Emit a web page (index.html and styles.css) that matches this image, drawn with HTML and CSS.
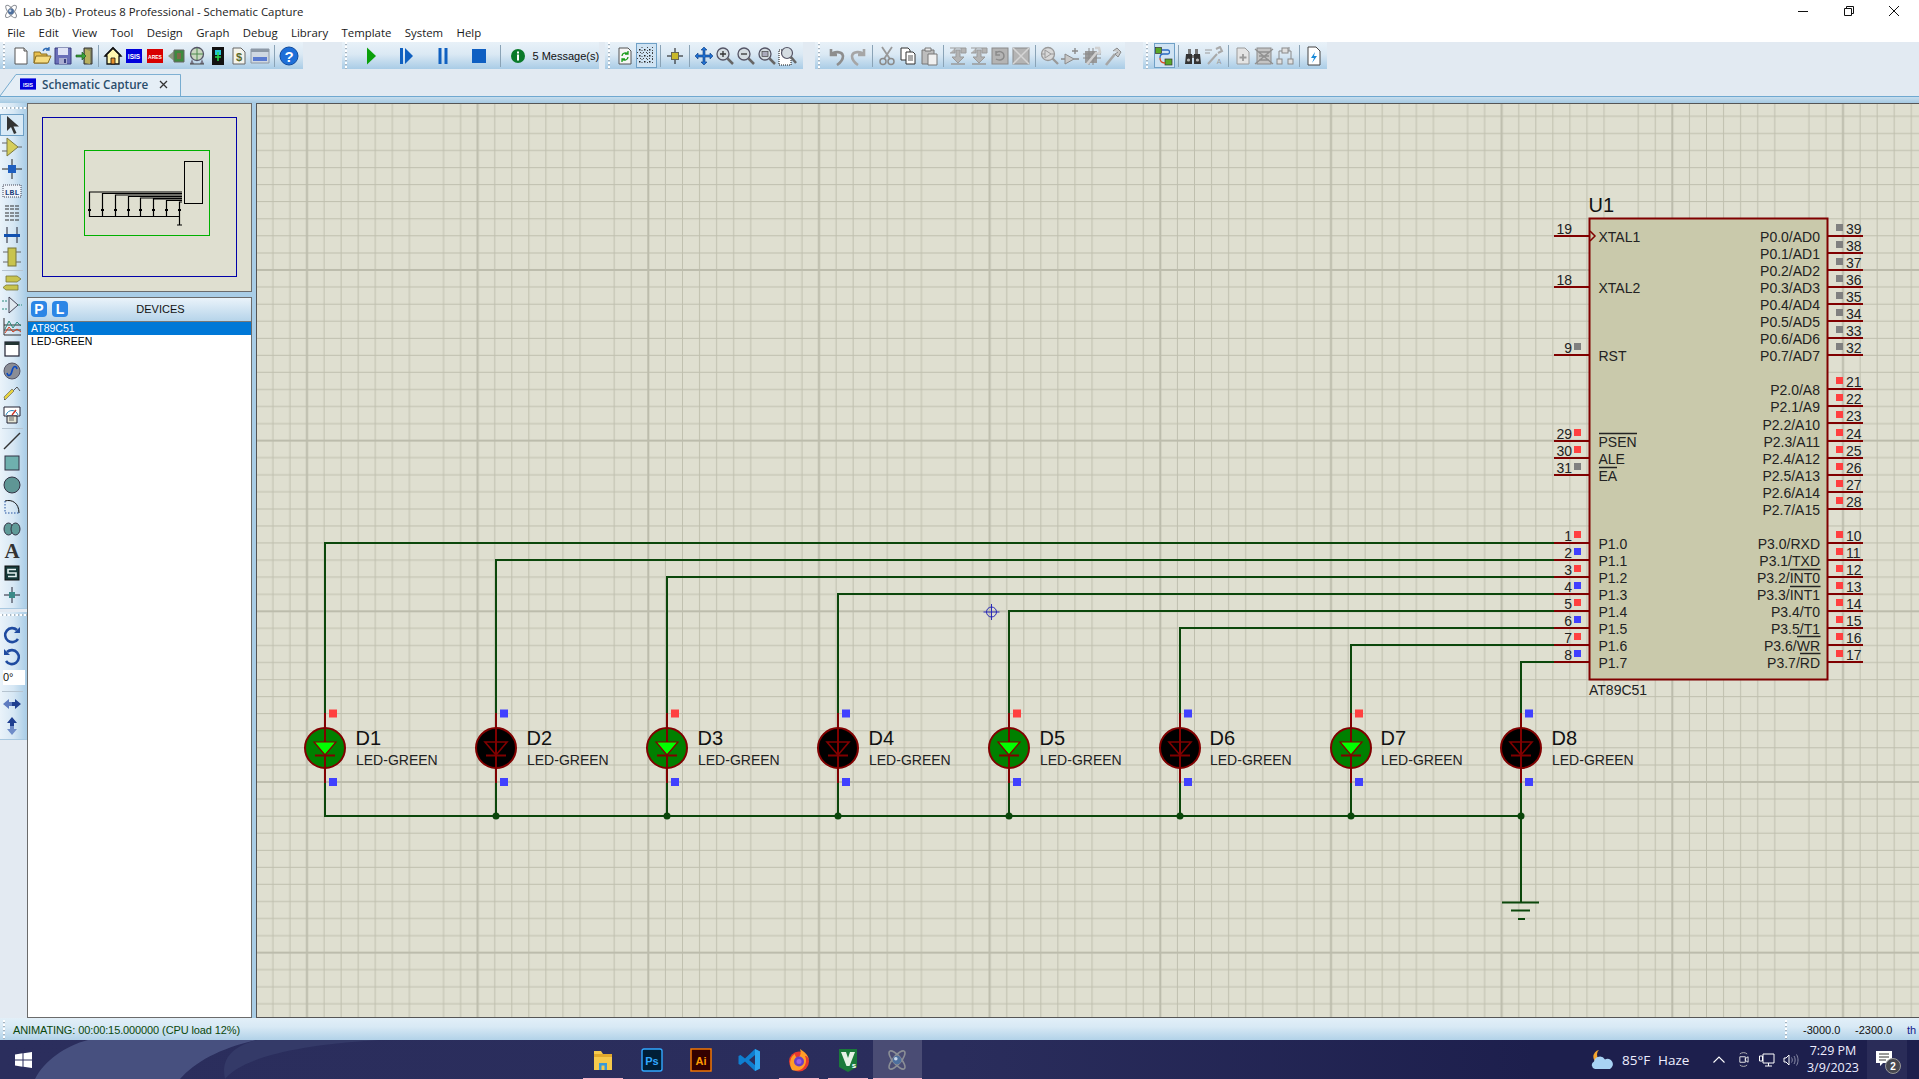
FILE: index.html
```html
<!DOCTYPE html>
<html lang="en">
<head>
<meta charset="utf-8">
<title>Lab 3(b) - Proteus 8 Professional - Schematic Capture</title>
<link rel="stylesheet" href="styles.css">
</head>
<body>
<svg class="defs" width="0" height="0" aria-hidden="true">
  <defs>
    <symbol id="atom" viewBox="0 0 20 20">
      <g fill="none" stroke="#8b8f96" stroke-width="1.3">
        <ellipse cx="10" cy="10" rx="9.5" ry="3.4" transform="rotate(50 10 10)"/>
        <ellipse cx="10" cy="10" rx="9.5" ry="3.4" transform="rotate(-50 10 10)"/>
      </g>
      <circle cx="10" cy="10" r="3.6" fill="#4d6f9e"/>
      <circle cx="9" cy="9" r="1.5" fill="#c9d8ea"/>
    </symbol>
    <g id="led-on">
      <path d="M0 713V783" stroke="#800000" stroke-width="2"/>
      <circle cx="0" cy="748" r="20" fill="#008000" stroke="#800000" stroke-width="2"/>
      <path d="M-11 742H11L0 755Z" fill="#00ff00" stroke="#800000" stroke-width="1.200"/>
      <path d="M0 728V742M0 755V768M-10 755.500H10" stroke="#800000" stroke-width="2" fill="none"/>
    </g>
    <g id="led-off">
      <path d="M0 713V783" stroke="#800000" stroke-width="2"/>
      <circle cx="0" cy="748" r="20" fill="#000" stroke="#800000" stroke-width="2"/>
      <path d="M-11 742H11L0 755Z" fill="none" stroke="#800000" stroke-width="1.600"/>
      <path d="M0 728V768M-10 755.500H10" stroke="#800000" stroke-width="2" fill="none"/>
    </g>
    <pattern id="grid" x="255.800" y="99.300" width="170.670" height="170.670" patternUnits="userSpaceOnUse">
      <path class="g-thin" d="M17.070 0V171M34.130 0V171M51.200 0V171M68.270 0V171M85.330 0V171M102.400 0V171M119.470 0V171M136.530 0V171M153.600 0V171M0 17.070H171M0 34.130H171M0 51.200H171M0 68.270H171M0 85.330H171M0 102.400H171M0 119.470H171M0 136.530H171M0 153.600H171"/>
      <path class="g-thick" d="M51.200 0V171M0 0H171M0 170.670H171"/>
    </pattern>
  </defs>
</svg>

<header class="titlebar">
  <svg class="title-ico"><use href="#atom"/></svg>
  <span class="title-text">Lab 3(b) - Proteus 8 Professional - Schematic Capture</span>
  <div class="winctl">
    <span class="winbtn"><svg width="12" height="12" viewBox="0 0 12 12"><path d="M1 6.500H11" stroke="#111" fill="none"/></svg></span>
    <span class="winbtn"><svg width="12" height="12" viewBox="0 0 12 12"><path d="M1.500 3.500H8.500V10.500H1.500ZM3.500 3.500V1.500H10.500V8.500H8.500" stroke="#111" fill="none"/></svg></span>
    <span class="winbtn"><svg width="12" height="12" viewBox="0 0 12 12"><path d="M1 1L11 11M11 1L1 11" stroke="#111" fill="none"/></svg></span>
  </div>
</header>

<nav class="menubar">
  <span class="menu">File</span><span class="menu">Edit</span><span class="menu">View</span><span class="menu">Tool</span><span class="menu">Design</span><span class="menu">Graph</span><span class="menu">Debug</span><span class="menu">Library</span><span class="menu">Template</span><span class="menu">System</span><span class="menu">Help</span>
</nav>

<div class="toolbar">
  <div class="tbgroup g1">
    <span class="grip-v g-a"></span>
    <span class="tb"><svg viewBox="0 0 20 20"><path d="M4 2H13L16 5V18H4Z" fill="#fff" stroke="#555"/><path d="M13 2V5H16" fill="#ddd" stroke="#555"/></svg></span>
    <span class="tb"><svg viewBox="0 0 20 20"><path d="M2 6H8L9 8H15V17H2Z" fill="#e8c04e" stroke="#8a6d1e"/><path d="M4 10H19L16 17H2Z" fill="#f6dc80" stroke="#8a6d1e"/><path d="M11 5C12 2 15 2 17 3M17 1V4H14" fill="none" stroke="#2f6bb5" stroke-width="1.300"/></svg></span>
    <span class="tb"><svg viewBox="0 0 20 20"><path d="M2 2H18V18H2Z" fill="#6a6fb8" stroke="#3a3f80"/><path d="M5 2H15V9H5Z" fill="#dfe3f5"/><path d="M6 12H14V18H6Z" fill="#a9add0"/><path d="M11 13H13V17H11Z" fill="#3a3f80"/></svg></span>
    <span class="tb"><svg viewBox="0 0 20 20"><path d="M10 2H18V18H10Z" fill="#8a8a62" stroke="#333"/><path d="M11 3L16 5V18L11 17Z" fill="#b8b060"/><path d="M2 9H8V6L12 10L8 14V11H2Z" fill="#3aa23a" stroke="#145214" stroke-width=".6"/></svg></span>
    <span class="sep-v"></span>
    <span class="tb"><svg viewBox="0 0 20 20"><path d="M10 2L18 10H16V18H4V10H2Z" fill="#fff7b0" stroke="#111" stroke-width="1.300"/><path d="M2 10L10 2L18 10" fill="none" stroke="#111" stroke-width="1.600"/><path d="M8 12H12V18H8Z" fill="#e8902a" stroke="#111" stroke-width=".8"/></svg></span>
    <span class="tb"><svg viewBox="0 0 20 20"><rect x="2" y="3" width="16" height="14" fill="#0000dc"/><text x="10" y="13" class="logo-txt" text-anchor="middle">ISIS</text></svg></span>
    <span class="tb"><svg viewBox="0 0 20 20"><rect x="2" y="3" width="16" height="14" fill="#d80000"/><text x="10" y="12.500" class="logo-txt ares" text-anchor="middle">ARES</text></svg></span>
    <span class="tb"><svg viewBox="0 0 20 20"><path d="M2 10L8 5V15Z" fill="#8a9a80"/><path d="M8 4H18V16H8Z" fill="#3e8a3e" stroke="#666"/><path d="M11 7H15V13H11Z" fill="#7c6a48"/></svg></span>
    <span class="tb"><svg viewBox="0 0 20 20"><circle cx="10" cy="8" r="6.500" fill="#c9d6c0" stroke="#556"  stroke-width="1.300"/><path d="M10 2V14M4 8H16" stroke="#4e8a4e"/><path d="M5 13L3 18H7ZM15 13L13 18H17Z" fill="#778"/><path d="M3 18H17" stroke="#444"/></svg></span>
    <span class="tb"><svg viewBox="0 0 20 20"><path d="M4 1H16V19H4Z" fill="#111"/><path d="M7 4H13V9H7Z" fill="#24c4d8"/><path d="M10 6V15M7 11H13" stroke="#24d84a" stroke-width="1.500"/></svg></span>
    <span class="tb"><svg viewBox="0 0 20 20"><path d="M4 2H12L16 6V18H4Z" fill="#f4f4ec" stroke="#666"/><text x="10" y="15" class="dollar" text-anchor="middle">$</text></svg></span>
    <span class="tb"><svg viewBox="0 0 20 20"><path d="M1 3H19V17H1Z" fill="#cfd8e2" stroke="#8d99a6"/><path d="M1 3H19V6H1Z" fill="#8d99a6"/><path d="M3 11H17V15H3Z" fill="#5a7bd0"/></svg></span>
    <span class="sep-v"></span>
    <span class="tb"><svg viewBox="0 0 20 20"><circle cx="10" cy="10" r="9" fill="#1e6fd8" stroke="#0f4b9e"/><text x="10" y="15.500" class="help-q" text-anchor="middle">?</text></svg></span>
  </div>

  <div class="tbgroup g2">
    <span class="grip-v g-b"></span>
    <span class="tb-wide"><svg viewBox="0 0 20 20"><path d="M6 1.500L15 10L6 18.500Z" fill="#0aa00a"/></svg></span>
    <span class="tb-wide"><svg viewBox="0 0 20 20"><path d="M3 2H6V18H3Z" fill="#1060c0"/><path d="M8 2L16 10L8 18Z" fill="#1060c0"/></svg></span>
    <span class="tb-wide"><svg viewBox="0 0 20 20"><path d="M5.500 2H8.500V18H5.500ZM11.500 2H14.500V18H11.500Z" fill="#1060c0"/></svg></span>
    <span class="tb-wide"><svg viewBox="0 0 20 20"><rect x="3" y="3" width="14" height="14" fill="#0f5fc2"/></svg></span>
    <span class="sep-v sep-short"></span>
    <svg class="info" viewBox="0 0 14 14"><circle cx="7" cy="7" r="7" fill="#0a7a2a"/><rect x="6" y="2.500" width="2" height="2" fill="#fff"/><rect x="6" y="5.500" width="2" height="6" fill="#fff"/></svg>
    <span class="msg">5 Message(s)</span>
  </div>

  <div class="tbgroup g3">
    <span class="grip-v g-c"></span>
    <span class="tb"><svg viewBox="0 0 20 20"><path d="M4 2H13L16 5V18H4Z" fill="#f5f5f5" stroke="#555"/><path d="M7 10C7 7 11 6 13 8M13 5V8H10M13 11C13 14 9 15 7 13M7 16V13H10" fill="none" stroke="#1a9a1a" stroke-width="1.300"/></svg></span>
    <span class="tb active"><svg viewBox="0 0 20 20"><path d="M3 3H4.500V4.500H3ZM8 3H9.500V4.500H8ZM13 3H14.500V4.500H13ZM3 9H4.500V10.500H3ZM8 9H9.500V10.500H8ZM13 9H14.500V10.500H13ZM3 15H4.500V16.500H3ZM8 15H9.500V16.500H8ZM13 15H14.500V16.500H13Z" fill="#222"/><path d="M1 6.500H18M1 12.500H18M6 1V18M11.500 1V18M16.500 1V18" stroke="#444" stroke-dasharray="1 2"/></svg></span>
    <span class="sep-v"></span>
    <span class="tb"><svg viewBox="0 0 20 20"><path d="M10 2V18M2 10H18" stroke="#111"/><rect x="6.500" y="6.500" width="7" height="7" fill="#c8b82a" stroke="#665"/></svg></span>
    <span class="sep-v"></span>
    <span class="tb"><svg viewBox="0 0 20 20"><path d="M10 1L13 4H11V9H16V7L19 10L16 13V11H11V16H13L10 19L7 16H9V11H4V13L1 10L4 7V9H9V4H7Z" fill="#1f6fd0" stroke="#0c3b80" stroke-width=".6"/></svg></span>
    <span class="tb"><svg viewBox="0 0 20 20"><circle cx="8" cy="8" r="6" fill="#d5dde2" stroke="#556" stroke-width="1.300"/><path d="M5 8H11M8 5V11" stroke="#333" stroke-width="1.300"/><path d="M12.500 12.500L18 18" stroke="#666" stroke-width="2.500"/></svg></span>
    <span class="tb"><svg viewBox="0 0 20 20"><circle cx="8" cy="8" r="6" fill="#d5dde2" stroke="#556" stroke-width="1.300"/><path d="M5 8H11" stroke="#333" stroke-width="1.300"/><path d="M12.500 12.500L18 18" stroke="#666" stroke-width="2.500"/></svg></span>
    <span class="tb"><svg viewBox="0 0 20 20"><circle cx="8" cy="8" r="6" fill="#d5dde2" stroke="#556" stroke-width="1.300"/><rect x="5" y="5.500" width="6" height="5" fill="#aab" stroke="#444" stroke-width=".7"/><path d="M12.500 12.500L18 18" stroke="#666" stroke-width="2.500"/></svg></span>
    <span class="tb"><svg viewBox="0 0 20 20"><path d="M1 4H13V19H1Z" fill="#fff" stroke="#111" stroke-dasharray="1 1"/><circle cx="9" cy="7" r="5.500" fill="#d5dde2" stroke="#556" stroke-width="1.200"/><path d="M13 11L18 17" stroke="#666" stroke-width="2.500"/></svg></span>
  </div>

  <div class="tbgroup g4">
    <span class="grip-v g-d"></span>
    <span class="tb"><svg viewBox="0 0 20 20"><path d="M4 3V9H10M4 9C7 5 15 5 16 10C16 14 13 17 10 19" fill="none" stroke="#8e8e8e" stroke-width="2.600"/></svg></span>
    <span class="tb"><svg viewBox="0 0 20 20"><path d="M16 3V9H10M16 9C13 5 5 5 4 10C4 14 7 17 10 19" fill="none" stroke="#a6a6a6" stroke-width="2.600"/></svg></span>
    <span class="sep-v"></span>
    <span class="tb"><svg viewBox="0 0 20 20"><path d="M5 1L13 13M15 1L7 13" stroke="#999" stroke-width="1.800"/><circle cx="6" cy="15.500" r="3" fill="none" stroke="#8a8a8a" stroke-width="1.500"/><circle cx="14" cy="15.500" r="3" fill="none" stroke="#8a8a8a" stroke-width="1.500"/></svg></span>
    <span class="tb"><svg viewBox="0 0 20 20"><path d="M3 2H10L12 4V14H3Z" fill="#fff" stroke="#333"/><path d="M8 6H15L17 8V18H8Z" fill="#fff" stroke="#333"/><path d="M10 10H15M10 12H15M10 14H15" stroke="#555"/></svg></span>
    <span class="tb"><svg viewBox="0 0 20 20"><path d="M3 4H15V18H3Z" fill="#bdbdbd" stroke="#777"/><path d="M6 2H12V5H6Z" fill="#e8e8e8" stroke="#777"/><path d="M9 8H18V19H9Z" fill="#f0f0f0" stroke="#777"/></svg></span>
    <span class="sep-v"></span>
    <span class="tb"><svg viewBox="0 0 20 20"><path d="M2 2H18V7H13V2M7 2V7H2M8 4H12V11H16L10 17L4 11H8Z" fill="#b4b4b4" stroke="#9a9a9a"/><path d="M3 18H17" stroke="#9a9a9a" stroke-width="1.500"/></svg></span>
    <span class="tb"><svg viewBox="0 0 20 20"><path d="M2 2H18V7H13V2M7 2V7H2M8 4H12V11H16L10 17L4 11H8Z" fill="#b4b4b4" stroke="#9a9a9a"/><path d="M3 18H17" stroke="#9a9a9a" stroke-width="1.500"/></svg></span>
    <span class="tb"><svg viewBox="0 0 20 20"><rect x="2" y="2" width="16" height="16" fill="#b4b4b4" stroke="#8a8a8a"/><path d="M6 7C9 4 14 6 14 10C14 14 9 15 6 13M6 5V9H10" fill="none" stroke="#8a8a8a" stroke-width="1.400"/></svg></span>
    <span class="tb"><svg viewBox="0 0 20 20"><rect x="2" y="2" width="16" height="16" fill="#b4b4b4" stroke="#8a8a8a"/><path d="M2 2L18 18M18 2L2 18" stroke="#d5d5d5" stroke-width="1.500"/></svg></span>
    <span class="sep-v"></span>
    <span class="tb"><svg viewBox="0 0 20 20"><circle cx="8" cy="8" r="6.500" fill="#d8d8d8" stroke="#999" stroke-width="1.300"/><path d="M5 4L11 8L5 12ZM1 8H5M11 8H15" fill="none" stroke="#9a9a9a"/><path d="M12.500 12.500L18 18" stroke="#999" stroke-width="2.300"/></svg></span>
    <span class="tb"><svg viewBox="0 0 20 20"><path d="M4 8L13 13L4 18Z" fill="#c8c8c8" stroke="#8a8a8a"/><path d="M0 13H4M13 13H18M14 2V8M11 5H17" stroke="#8a8a8a" stroke-width="1.400"/></svg></span>
    <span class="tb"><svg viewBox="0 0 20 20"><rect x="3" y="5" width="12" height="12" fill="#9a9a9a"/><path d="M1 8H19M1 12H19M7 2V19M11 2V19" stroke="#8a8a8a"/><path d="M5 18L15 6M13 2L17 2L18 6L16 8" stroke="#d0d0d0" stroke-width="2.500" fill="none"/></svg></span>
    <span class="tb"><svg viewBox="0 0 20 20"><path d="M3 19L12 8" stroke="#a6a6a6" stroke-width="2.600"/><path d="M10 5L14 2L18 6L15 11L12 8L15 6" fill="#c8c8c8" stroke="#8a8a8a"/></svg></span>
  </div>

  <div class="tbgroup g5">
    <span class="grip-v g-e"></span>
    <span class="tb active"><svg viewBox="0 0 20 20"><rect x="1.500" y="1.500" width="6" height="6" fill="#5aa828" stroke="#333" stroke-width=".7"/><rect x="11" y="13" width="7" height="6" fill="#5aa828" stroke="#333" stroke-width=".7"/><path d="M8 4H14C16 4 16 8 14 8H9C7 8 6 10 6 12" fill="none" stroke="#2a6ac0" stroke-width="1.300"/><path d="M6 12C6 15 7 17 11 17" fill="none" stroke="#d84a20" stroke-width="1.300"/></svg></span>
    <span class="sep-v"></span>
    <span class="tb"><svg viewBox="0 0 20 20"><path d="M3 8H9V18H2ZM11 8H17L18 18H11Z" fill="#333"/><path d="M5 3H8V8H5ZM12 3H15V8H12ZM9 9H11V12H9Z" fill="#777"/><circle cx="5.500" cy="14" r="1.600" fill="#bbb"/><circle cx="14.500" cy="14" r="1.600" fill="#bbb"/></svg></span>
    <span class="tb"><svg viewBox="0 0 20 20"><path d="M1 4H8M1 7H6" stroke="#999" stroke-width="1.200"/><path d="M4 18L13 8M12 3L16 1L18 5L14 7" stroke="#a9a9a9" stroke-width="2" fill="none"/><text x="15" y="18" class="small-a" text-anchor="middle">A</text></svg></span>
    <span class="sep-v"></span>
    <span class="tb"><svg viewBox="0 0 20 20"><path d="M4 2H12L16 6V18H4Z" fill="#e4e4e4" stroke="#9a9a9a"/><path d="M10 8V15M6.500 11.500H13.500" stroke="#9a9a9a" stroke-width="1.800"/></svg></span>
    <span class="tb"><svg viewBox="0 0 20 20"><rect x="3" y="2" width="14" height="16" fill="#c4c4c4" stroke="#8a8a8a"/><path d="M1 3L19 18M19 3L1 18M5 6H15M5 10H15M5 14H15" stroke="#8f8f8f" stroke-width="1.300"/></svg></span>
    <span class="tb"><svg viewBox="0 0 20 20"><rect x="7" y="2" width="6" height="5" fill="#e0e0e0" stroke="#8a8a8a"/><rect x="2" y="13" width="5" height="5" fill="#e0e0e0" stroke="#8a8a8a"/><rect x="13" y="13" width="5" height="5" fill="#e0e0e0" stroke="#8a8a8a"/><path d="M7 5H4V13M13 5H16V13M14 1V5" fill="none" stroke="#8a8a8a"/></svg></span>
    <span class="sep-v"></span>
    <span class="tb"><svg viewBox="0 0 20 20"><path d="M4 1H12L16 5V19H4Z" fill="#fff" stroke="#444"/><path d="M11 6L7 12H10L8 17L13 10H10Z" fill="#1a8ad8"/></svg></span>
  </div>
</div>

<div class="tabrow">
  <div class="tab">
    <svg class="tab-shape" viewBox="0 0 181 26" preserveAspectRatio="none"><path d="M0 26L16 .500H180.500V26" fill="#e5eef6" stroke="#6ea6cc"/></svg>
    <svg class="tab-ico" viewBox="0 0 20 14"><rect width="20" height="14" fill="#0000dc"/><text x="10" y="10.500" class="logo-txt" text-anchor="middle">ISIS</text></svg>
    <span class="tab-label">Schematic Capture</span>
    <svg class="tab-close" viewBox="0 0 9 9"><path d="M1 1L8 8M8 1L1 8" stroke="#333" stroke-width="1.300"/></svg>
  </div>
</div>
<div class="strip"></div>

<main class="workspace">
  <aside class="lefttools">
    <div class="ltgroup">
      <span class="grip-h"></span>
      <span class="lt active"><svg viewBox="0 0 20 20"><path d="M5 1V16L9 12L12 19L14.500 18L11.500 11.500H17Z" fill="#333"/></svg></span>
      <span class="lt"><svg viewBox="0 0 20 20"><path d="M5 1V19L16 10Z" fill="#d6ce5a" stroke="#7c7a40"/><path d="M0 6H5M0 14H5M16 10H20" stroke="#666"/></svg></span>
      <span class="lt"><svg viewBox="0 0 20 20"><path d="M10 0V20M0 10H20" stroke="#222"/><rect x="6" y="6" width="8" height="8" fill="#1f5fc0"/></svg></span>
      <span class="lt"><svg viewBox="0 0 20 20"><rect x="1" y="4" width="18" height="12" fill="#eef4fa" stroke="#445" stroke-dasharray="1 1"/><text x="10" y="13.500" class="lbl-txt" text-anchor="middle">LBL</text></svg></span>
      <span class="lt"><svg viewBox="0 0 20 20"><path d="M3 3H17M3 6H17M3 10H17M3 13H17M3 17H17" stroke="#333" stroke-width="1.200" stroke-dasharray="4 1"/></svg></span>
      <span class="lt"><svg viewBox="0 0 20 20"><path d="M5 2V18M15 2V18" stroke="#223"/><rect x="2" y="9" width="16" height="3" fill="#1050b0"/></svg></span>
      <span class="lt"><svg viewBox="0 0 20 20"><path d="M1 5H6M14 5H19M1 15H6M14 15H19" stroke="#666"/><rect x="6" y="1" width="8" height="18" fill="#c8c44e" stroke="#77753a"/></svg></span>
      <span class="lt-sep"></span>
      <span class="lt"><svg viewBox="0 0 20 20"><path d="M4 3H15L19 6L15 9H4Z" fill="#c8c44e" stroke="#77753a" stroke-width=".8"/><path d="M4 12H16L16 17H4L1 14.500Z" fill="#c8c44e" stroke="#77753a" stroke-width=".8"/></svg></span>
      <span class="lt"><svg viewBox="0 0 20 20"><path d="M7 2L16 10L7 18Z" fill="#dfe8ee" stroke="#445"/><path d="M0 6H5M0 14H5M16 10H20" stroke="#2a8a7a" stroke-dasharray="2 1"/></svg></span>
      <span class="lt"><svg viewBox="0 0 20 20"><path d="M2 1V18H19M2 13H19M2 8H19" stroke="#333" fill="none"/><path d="M3 12L7 4L11 11L15 5L19 9" stroke="#2a8a7a" fill="none"/><path d="M3 16L7 10L11 15L15 12L19 15" stroke="#d04020" fill="none"/></svg></span>
      <span class="lt"><svg viewBox="0 0 20 20"><rect x="3" y="3" width="14" height="14" fill="#fff" stroke="#223" stroke-width="1.200"/><rect x="3" y="3" width="14" height="3" fill="#233"/></svg></span>
      <span class="lt"><svg viewBox="0 0 20 20"><circle cx="10" cy="10" r="8" fill="#8a8d96" stroke="#556"/><path d="M5 12C6 16 9 15 10 10C11 5 14 4 15 8" fill="none" stroke="#0c4ac0" stroke-width="1.600"/></svg></span>
      <span class="lt"><svg viewBox="0 0 20 20"><path d="M2 17L12 7L15 4L18 8" fill="none" stroke="#555"/><path d="M3 17L12 8L10 6L2 14Z" fill="#e6d340" stroke="#555" stroke-width=".6"/></svg></span>
      <span class="lt"><svg viewBox="0 0 20 20"><path d="M2 2H18V11H2Z" fill="#fff" stroke="#223"/><path d="M4 10C6 4 14 4 16 10" fill="none" stroke="#2a8ac0"/><path d="M10 10L14 5" stroke="#d03020" stroke-width="1.300"/><path d="M5 11H15V18H5Z" fill="#e4e4d4" stroke="#223"/><path d="M7 13H12M7 15H12" stroke="#666"/></svg></span>
      <span class="lt-sep"></span>
      <span class="lt"><svg viewBox="0 0 20 20"><path d="M2 18L18 2" stroke="#333" stroke-width="1.500"/></svg></span>
      <span class="lt"><svg viewBox="0 0 20 20"><rect x="3" y="3" width="14" height="14" fill="#6fb0ae" stroke="#334"/></svg></span>
      <span class="lt"><svg viewBox="0 0 20 20"><circle cx="10" cy="10" r="8" fill="#5f9695" stroke="#334"/></svg></span>
      <span class="lt"><svg viewBox="0 0 20 20"><path d="M3 4C10 2 17 6 17 16" fill="none" stroke="#111"/><path d="M3 4V16H17" fill="none" stroke="#2050a0" stroke-dasharray="1.500 1.500"/></svg></span>
      <span class="lt"><svg viewBox="0 0 20 20"><ellipse cx="6.500" cy="10" rx="4.500" ry="6" fill="#5f9a98" stroke="#334"/><ellipse cx="13.500" cy="10" rx="4.500" ry="6" fill="#5f9a98" stroke="#334"/></svg></span>
      <span class="lt"><span class="lt-a">A</span></span>
      <span class="lt"><svg viewBox="0 0 20 20"><rect x="3" y="3" width="14" height="14" fill="#163a3a" stroke="#111"/><path d="M14 6.500H6V10H14V13.500H6" fill="none" stroke="#e4f0f0" stroke-width="1.600"/></svg></span>
      <span class="lt"><svg viewBox="0 0 20 20"><path d="M10 2V18M2 10H18" stroke="#223"/><rect x="7" y="7" width="6" height="6" fill="#3a8a88"/></svg></span>
    </div>
    <div class="ltgroup lt2">
      <span class="grip-h grip-b"></span>
      <span class="lt"><svg viewBox="0 0 20 20"><path d="M16 14A7 7 0 1 1 15 5" fill="none" stroke="#1f4ba0" stroke-width="2.600"/><path d="M18 2V8H12Z" fill="#1f4ba0"/></svg></span>
      <span class="lt"><svg viewBox="0 0 20 20"><path d="M4 14A7 7 0 1 0 5 5" fill="none" stroke="#1f4ba0" stroke-width="2.600"/><path d="M2 2V8H8Z" fill="#1f4ba0"/></svg></span>
      <span class="angle">0°</span>
      <span class="lt-sep lt-sep-b"></span>
      <span class="lt"><svg viewBox="0 0 20 20"><path d="M1 10L7 5V8H10V12H7V15Z" fill="#5f7cc0"/><path d="M19 10L13 5V8H10V12H13V15Z" fill="#1f3f90"/></svg></span>
      <span class="lt"><svg viewBox="0 0 20 20"><path d="M10 1L15 7H12V10H8V7H5Z" fill="#1f3f90"/><path d="M10 19L15 13H12V10H8V13H5Z" fill="#6f8cc8"/></svg></span>
    </div>
  </aside>

  <section class="sidepanel">
    <div class="overview">
      <svg class="ov-svg" viewBox="28 104 223 187">
        <rect x="42.500" y="117.500" width="194" height="159" fill="none" stroke="#0000a8"/>
        <rect x="84.500" y="150.500" width="125" height="85" fill="none" stroke="#00b000"/>
        <rect x="184.500" y="161.500" width="18" height="42" fill="none" stroke="#000"/>
        <path class="ov-wire" d="M89.500 210V192H182M102.500 210V193.500H182M115.500 210V195H182M128.500 210V196.500H182M140.500 210V198H182M153.500 210V199H182M166.500 210V200.500H182M179.500 210V202H182M89.500 210V216.500H179.500V225M102.500 210V216M115.500 210V216M128.500 210V216M140.500 210V216M153.500 210V216M166.500 210V216M179.500 210V216M177 225H182"/>
        <path class="ov-dot" d="M88 209h3v2h-3zM101 209h3v2h-3zM114 209h3v2h-3zM127 209h3v2h-3zM139 209h3v2h-3zM152 209h3v2h-3zM165 209h3v2h-3zM178 209h3v2h-3z"/>
      </svg>
    </div>
    <div class="devices">
      <div class="dev-head">
        <span class="pl">P</span><span class="pl">L</span>
        <span class="dev-title">DEVICES</span>
      </div>
      <ul class="dev-list">
        <li class="dev selected">AT89C51</li>
        <li class="dev">LED-GREEN</li>
      </ul>
    </div>
  </section>

  <div class="canvas">
    <svg class="schem" viewBox="256 103 1663 915">
      <rect x="256" y="103" width="1663" height="915" fill="#dfdfd0"/>
      <rect x="256" y="103" width="1663" height="915" fill="url(#grid)"/>

      <!-- wires -->
      <path class="wire" d="M1554 543H325V713M1554 560H496V713M1554 577H667V713M1554 594H838V713M1554 611H1009V713M1554 628H1180V713M1554 645H1351V713M1554 662H1521V713M325 783V816H1521V783M496 783V816M667 783V816M838 783V816M1009 783V816M1180 783V816M1351 783V816M1521 816V902"/>
      <path class="wire" d="M1502 902.500H1539M1511 910.500H1530M1518 919H1525"/>
      <g class="junction"><circle cx="496" cy="816" r="3.500"/><circle cx="667" cy="816" r="3.500"/><circle cx="838" cy="816" r="3.500"/><circle cx="1009" cy="816" r="3.500"/><circle cx="1180" cy="816" r="3.500"/><circle cx="1351" cy="816" r="3.500"/><circle cx="1521" cy="816" r="3.500"/></g>

      <!-- leds -->
      <use href="#led-on" x="325"/><use href="#led-off" x="496"/><use href="#led-on" x="667"/><use href="#led-off" x="838"/><use href="#led-on" x="1009"/><use href="#led-off" x="1180"/><use href="#led-on" x="1351"/><use href="#led-off" x="1521"/>
      <path class="sq-red" d="M329 709.500h8v8h-8zM671 709.500h8v8h-8zM1013 709.500h8v8h-8zM1355 709.500h8v8h-8z"/>
      <path class="sq-blue" d="M500 709.500h8v8h-8zM842 709.500h8v8h-8zM1184 709.500h8v8h-8zM1525 709.500h8v8h-8zM329 778h8v8h-8zM500 778h8v8h-8zM671 778h8v8h-8zM842 778h8v8h-8zM1013 778h8v8h-8zM1184 778h8v8h-8zM1355 778h8v8h-8zM1525 778h8v8h-8z"/>
      <g class="ref"><text x="355.500" y="745">D1</text><text x="526.500" y="745">D2</text><text x="697.500" y="745">D3</text><text x="868.500" y="745">D4</text><text x="1039.500" y="745">D5</text><text x="1209.500" y="745">D6</text><text x="1380.500" y="745">D7</text><text x="1551.500" y="745">D8</text></g>
      <g class="pname"><text x="356" y="765">LED-GREEN</text><text x="527" y="765">LED-GREEN</text><text x="698" y="765">LED-GREEN</text><text x="869" y="765">LED-GREEN</text><text x="1040" y="765">LED-GREEN</text><text x="1210" y="765">LED-GREEN</text><text x="1381" y="765">LED-GREEN</text><text x="1552" y="765">LED-GREEN</text></g>

      <!-- cursor -->
      <path class="cursor" d="M991.500 604V620M983.500 612H999.500"/><circle class="cursor" cx="991.500" cy="612" r="5"/>

      <!-- chip -->
      <path class="pinline" d="M1554 236H1589M1554 287H1589M1554 355H1589M1554 441H1589M1554 458H1589M1554 475H1589M1554 543H1589M1554 560H1589M1554 577H1589M1554 594H1589M1554 611H1589M1554 628H1589M1554 645H1589M1554 662H1589M1828 236H1863M1828 253H1863M1828 270H1863M1828 287H1863M1828 304H1863M1828 321H1863M1828 338H1863M1828 355H1863M1828 389H1863M1828 406H1863M1828 423H1863M1828 441H1863M1828 458H1863M1828 475H1863M1828 492H1863M1828 509H1863M1828 543H1863M1828 560H1863M1828 577H1863M1828 594H1863M1828 611H1863M1828 628H1863M1828 645H1863M1828 662H1863"/>
      <rect class="chip" x="1589.500" y="218.500" width="238" height="461"/>
      <path class="xtal" d="M1590 231L1595 236L1590 241"/>

      <path class="sq-grey" d="M1836 224h7v7h-7zM1836 241h7v7h-7zM1836 258h7v7h-7zM1836 275h7v7h-7zM1836 292h7v7h-7zM1836 309h7v7h-7zM1836 326h7v7h-7zM1836 343h7v7h-7zM1574 343h7v7h-7zM1574 463h7v7h-7z"/>
      <path class="sq-red" d="M1574 429h7v7h-7zM1574 446h7v7h-7zM1574 531h7v7h-7zM1574 565h7v7h-7zM1574 599h7v7h-7zM1574 633h7v7h-7zM1836 377h7v7h-7zM1836 394h7v7h-7zM1836 411h7v7h-7zM1836 429h7v7h-7zM1836 446h7v7h-7zM1836 463h7v7h-7zM1836 480h7v7h-7zM1836 497h7v7h-7zM1836 531h7v7h-7zM1836 548h7v7h-7zM1836 565h7v7h-7zM1836 582h7v7h-7zM1836 599h7v7h-7zM1836 616h7v7h-7zM1836 633h7v7h-7zM1836 650h7v7h-7z"/>
      <path class="sq-blue" d="M1574 548h7v7h-7zM1574 582h7v7h-7zM1574 616h7v7h-7zM1574 650h7v7h-7z"/>

      <text class="ref" x="1588.500" y="212">U1</text>
      <text class="pname" x="1589" y="695">AT89C51</text>

      <g class="pname">
        <text x="1598.500" y="242">XTAL1</text><text x="1598.500" y="293">XTAL2</text><text x="1598.500" y="361">RST</text>
        <text x="1598.500" y="447">PSEN</text><text x="1598.500" y="464">ALE</text><text x="1598.500" y="481">EA</text>
        <text x="1598.500" y="549">P1.0</text><text x="1598.500" y="566">P1.1</text><text x="1598.500" y="583">P1.2</text><text x="1598.500" y="600">P1.3</text><text x="1598.500" y="617">P1.4</text><text x="1598.500" y="634">P1.5</text><text x="1598.500" y="651">P1.6</text><text x="1598.500" y="668">P1.7</text>
      </g>
      <g class="pname end">
        <text x="1820" y="242">P0.0/AD0</text><text x="1820" y="259">P0.1/AD1</text><text x="1820" y="276">P0.2/AD2</text><text x="1820" y="293">P0.3/AD3</text><text x="1820" y="310">P0.4/AD4</text><text x="1820" y="327">P0.5/AD5</text><text x="1820" y="344">P0.6/AD6</text><text x="1820" y="361">P0.7/AD7</text>
        <text x="1820" y="395">P2.0/A8</text><text x="1820" y="412">P2.1/A9</text><text x="1820" y="430">P2.2/A10</text><text x="1820" y="447">P2.3/A11</text><text x="1820" y="464">P2.4/A12</text><text x="1820" y="481">P2.5/A13</text><text x="1820" y="498">P2.6/A14</text><text x="1820" y="515">P2.7/A15</text>
        <text x="1820" y="549">P3.0/RXD</text><text x="1820" y="566">P3.1/TXD</text><text x="1820" y="583">P3.2/INT0</text><text x="1820" y="600">P3.3/INT1</text><text x="1820" y="617">P3.4/T0</text><text x="1820" y="634">P3.5/T1</text><text x="1820" y="651">P3.6/WR</text><text x="1820" y="668">P3.7/RD</text>
      </g>
      <path class="overbar" d="M1599 433.500H1637M1599 467.500H1617M1790 569.500H1820.500M1790 586.500H1820.500M1797 636.500H1820.500M1800 653.500H1820.500"/>

      <g class="pname end">
        <text x="1572" y="234">19</text><text x="1572" y="285">18</text><text x="1572" y="353">9</text><text x="1572" y="439">29</text><text x="1572" y="456">30</text><text x="1572" y="473">31</text>
        <text x="1572" y="541">1</text><text x="1572" y="558">2</text><text x="1572" y="575">3</text><text x="1572" y="592">4</text><text x="1572" y="609">5</text><text x="1572" y="626">6</text><text x="1572" y="643">7</text><text x="1572" y="660">8</text>
      </g>
      <g class="pname">
        <text x="1846" y="234">39</text><text x="1846" y="251">38</text><text x="1846" y="268">37</text><text x="1846" y="285">36</text><text x="1846" y="302">35</text><text x="1846" y="319">34</text><text x="1846" y="336">33</text><text x="1846" y="353">32</text>
        <text x="1846" y="387">21</text><text x="1846" y="404">22</text><text x="1846" y="421">23</text><text x="1846" y="439">24</text><text x="1846" y="456">25</text><text x="1846" y="473">26</text><text x="1846" y="490">27</text><text x="1846" y="507">28</text>
        <text x="1846" y="541">10</text><text x="1846" y="558">11</text><text x="1846" y="575">12</text><text x="1846" y="592">13</text><text x="1846" y="609">14</text><text x="1846" y="626">15</text><text x="1846" y="643">16</text><text x="1846" y="660">17</text>
      </g>
    </svg>
  </div>
</main>

<footer class="statusbar">
  <span class="grip-v grip-s"></span>
  <span class="status-text">ANIMATING: 00:00:15.000000 (CPU load 12%)</span>
  <span class="status-right">
    <span class="status-sep"></span>
    <span class="grip-v grip-s2"></span>
    <span class="coord">-3000.0</span>
    <span class="coord">-2300.0</span>
    <span class="coord th">th</span>
  </span>
</footer>

<div class="taskbar">
  <svg class="wallpaper" viewBox="0 0 400 39" preserveAspectRatio="none"><path d="M35 39C45 20 65 6 88 0H257C220 8 195 22 180 39Z" fill="#47507f"/><path d="M225 39C240 20 290 5 380 0H257C225 8 222 25 225 39Z" fill="#343a68"/></svg>
  <span class="start"><svg width="17" height="16" viewBox="0 0 17 16"><path d="M0 2.500L7.500 1.300V7.500H0ZM8.500 1.200L17 0V7.500H8.500ZM0 8.500H7.500V14.700L0 13.500ZM8.500 8.500H17V16L8.500 14.800Z" fill="#fff"/></svg></span>
  <div class="apps">
    <span class="app pinned"><svg viewBox="0 0 24 24"><path d="M3 3H10L12 6H21V22H3Z" fill="#f6c94c"/><path d="M3 6H21V9H3Z" fill="#e2a92c"/><path d="M8 22V15H16V22H13.500V17.500H10.500V22Z" fill="#3a9ad8"/></svg></span>
    <span class="app"><svg viewBox="0 0 24 24"><rect x="2" y="1" width="20" height="22" rx="2" fill="#001e36" stroke="#31a8ff" stroke-width="1.400"/><text x="12" y="17" class="ps-txt" text-anchor="middle">Ps</text></svg></span>
    <span class="app"><svg viewBox="0 0 24 24"><rect x="2" y="1" width="20" height="22" fill="#330000" stroke="#ff7c00" stroke-width="1.400"/><text x="12" y="17" class="ai-txt" text-anchor="middle">Ai</text></svg></span>
    <span class="app"><svg viewBox="0 0 24 24"><path d="M17 1L22 3.500V20.500L17 23L7 13.500L2.500 17L0.500 16V8L2.500 7L7 10.500ZM17 7L11 12L17 17Z" fill="#0f7fd0"/><path d="M17 1L22 3.500V20.500L17 23Z" fill="#2ba4ee"/></svg></span>
    <span class="app pinned"><svg viewBox="0 0 24 24"><circle cx="12" cy="13.500" r="10" fill="#e8392e"/><path d="M5 22C1 15 4 8 8 6C8 9 10 10 12 9C14 7 14 4 13 1C18 4 22 8 22 13C21 8 19 8 18 8C20 12 19 17 16 20C13 23 8 23 5 22Z" fill="#ff9d26"/><circle cx="12" cy="13.500" r="5" fill="#6b3fc4"/><circle cx="12" cy="13.500" r="2.500" fill="#9a5fe0"/></svg></span>
    <span class="app pinned"><svg viewBox="0 0 24 24"><path d="M3 1H21V19L12 24L3 19Z" fill="#1a7a3a"/><path d="M5 4H10L12 10L14 4H19L13.500 18H10.500Z" fill="#e6f3e6"/><text x="18" y="20" class="vs-txt" text-anchor="middle">s</text></svg></span>
    <span class="app running pinned"><svg viewBox="0 0 24 24"><use href="#atom" width="24" height="24"/></svg></span>
  </div>
  <div class="tray">
    <svg class="weather" viewBox="0 0 24 20"><path d="M9 0A7 7 0 1 0 17 9A6 6 0 0 1 9 0Z" fill="#f4a52e"/><path d="M5 19A4 4 0 0 1 4 11.500A6 6 0 0 1 15 9.500A5 5 0 0 1 20 19Z" fill="#a8d2f4"/></svg>
    <span class="tray-txt temp">85°F</span>
    <span class="tray-txt haze">Haze</span>
    <svg class="chev" viewBox="0 0 12 7"><path d="M.500 6.500L6 1L11.500 6.500" fill="none" stroke="#fff" stroke-width="1.100"/></svg>
    <svg class="tray-ico cam" viewBox="0 0 12 16"><path d="M2 5H8V11H2ZM8 7L11 5V11L8 9Z" fill="none" stroke="#eee"/><path d="M2 2C4 0 8 0 10 2M2 14C4 16 8 16 10 14" fill="none" stroke="#bbb"/></svg>
    <svg class="tray-ico net" viewBox="0 0 16 14"><path d="M4 1H15V10H4ZM9.500 10V13M6 13H13M0.500 3H3.500V8H0.500Z" fill="none" stroke="#fff"/></svg>
    <svg class="tray-ico vol" viewBox="0 0 16 14"><path d="M1 5H3L6 2V12L3 9H1Z" fill="none" stroke="#fff"/><path d="M8.500 4.500C9.500 6 9.500 8 8.500 9.500M11 3C12.500 5 12.500 9 11 11M13.500 1.500C15.500 5 15.500 9 13.500 12.500" fill="none" stroke="#8a8ca8"/></svg>
    <div class="clock"><span>7:29 PM</span><span>3/9/2023</span></div>
    <span class="notif"><svg width="32" height="30" viewBox="0 0 32 30"><path d="M5 6H21V18H12L9 21V18H5Z" fill="#fff"/><path d="M8 9H18M8 12H18M8 15H15" stroke="#333"/><circle cx="22" cy="21" r="7.500" fill="#47474f" stroke="#999"/><text x="22" y="25" class="badge" text-anchor="middle">2</text></svg></span>
  </div>
</div>
</body>
</html>
```
FILE: styles.css
```css
* { box-sizing: border-box; }
html, body { margin: 0; padding: 0; }
body {
  width: 1919px;
  height: 1079px;
  overflow: hidden;
  display: flex;
  flex-direction: column;
  background: #fff;
  font-family: "Liberation Sans", Arial, sans-serif;
  color: #111;
}
.defs { position: absolute; }

/* title bar */
.titlebar { height: 22px; display: flex; align-items: center; padding-left: 3px; background: #fff; }
.title-ico { width: 16px; height: 17px; margin-right: 4px; }
.title-text { font: 11.400px "Open Sans", sans-serif; color: #222; }
.winctl { margin-left: auto; display: flex; margin-right: 2px; }
.winbtn { width: 45.500px; height: 22px; display: flex; align-items: center; justify-content: center; }

/* menu */
.menubar { height: 20px; display: flex; align-items: center; padding-left: .5px; background: #fff; }
.menu { font: 11.400px "Open Sans", sans-serif; color: #1a1a1a; padding: 0 6.700px; }

/* toolbars */
.toolbar { height: 28px; display: flex; align-items: stretch; background: #e2eaf2; }
.tbgroup {
  display: flex;
  align-items: center;
  height: 27px;
  background: linear-gradient(#e8f1f8, #dbe9f4 45%, #a9cce6);
}
.g1 { width: 303px; }
.g2 { width: 257px; margin-left: 39px; }
.g3 { width: 197.500px; margin-left: 6px; }
.g4 { width: 310.500px; margin-left: 12px; }
.g5 { width: 184px; margin-left: 18px; }
.grip-v {
  display: block;
  align-self: stretch;
  flex: none;
  background: repeating-linear-gradient(#fff 0 2px, #a8b4bf 2px 3px, transparent 3px 4px) no-repeat 3px 0 / 2px 100%;
}
.g-a { width: 10.500px; }
.g-b { width: 11px; }
.g-c { width: 9.500px; }
.g-d { width: 11.500px; }
.g-e { width: 10.500px; }
.tb { width: 21px; height: 25px; flex: none; display: flex; align-items: center; justify-content: center; }
.tb svg { width: 20px; height: 20px; }
.tb.active { background: #cfe3f3; outline: 1px solid #6fa0c6; outline-offset: -1px; }
.tb-wide { width: 36px; height: 25px; flex: none; display: flex; align-items: center; justify-content: center; }
.tb-wide svg { width: 20px; height: 20px; }
.sep-v { width: 8px; height: 22px; flex: none; background: linear-gradient(#8aa3b6, #8aa3b6) center / 1px 100% no-repeat; }
.sep-short { width: 6px; }
.info { width: 14px; height: 14px; margin-left: 8px; flex: none; }
.msg { margin-left: 7.500px; font: 11px "Liberation Sans", sans-serif; color: #111; white-space: nowrap; }
.logo-txt { font: 700 6.500px "Liberation Sans", sans-serif; fill: #fff; }
.logo-txt.ares { font-size: 5px; }
.dollar { font: 700 11px "Liberation Sans", sans-serif; fill: #5a6a2a; }
.help-q { font: 700 15px "Liberation Sans", sans-serif; fill: #fff; }
.small-a { font: 7px "Liberation Sans", sans-serif; fill: #999; }

/* tabs */
.tabrow { height: 27px; display: flex; align-items: flex-end; background: #e2eaf2; border-bottom: 1px solid #6fa8d0; }
.tab { position: relative; width: 181px; height: 22px; display: flex; align-items: center; padding-left: 20px; padding-bottom: 2px; }
.tab-shape { position: absolute; inset: 0; width: 100%; height: 100%; }
.tab-ico, .tab-label, .tab-close { position: relative; }
.tab-ico { width: 16px; height: 12px; flex: none; }
.tab-label { margin-left: 6px; font: 600 11.700px "Open Sans", sans-serif; color: #2a4d6b; white-space: nowrap; }
.tab-close { width: 9px; height: 9px; margin-left: 11px; flex: none; }
.strip { height: 6px; background: linear-gradient(#c6dded, #a6cae3); }

/* workspace */
.workspace { height: 915px; display: flex; background: #a9cde6; }
.lefttools { width: 27px; flex: none; display: flex; flex-direction: column; background: #e3eaf2; }
.ltgroup {
  display: flex;
  flex-direction: column;
  align-items: center;
  height: 506px;
  padding: 11px 3px 0 0;
  position: relative;
  background: linear-gradient(90deg, #eaf3fa, #d6e7f4 50%, #a8cce6);
  border-bottom: 1px solid #a8c8e0;
}
.lt2 { margin-top: 3px; height: 128px; padding-top: 12px; }
.grip-h {
  position: absolute;
  left: 0; right: 0; top: 4px;
  height: 2px;
  background: repeating-linear-gradient(90deg, #fff 0 2px, #aab6c0 2px 3px, transparent 3px 4px);
}
.grip-b { top: 2px; }
.lt { width: 24px; height: 22px; flex: none; display: flex; align-items: center; justify-content: center; }
.lt svg { width: 20px; height: 20px; }
.lt.active { background: #d8e9f6; outline: 1px solid #6fa0c6; outline-offset: -1px; height: 22px; }
.lt-sep { display: block; width: 21px; height: 4px; flex: none; background: linear-gradient(#b6c4d0, #b6c4d0) center / 100% 1px no-repeat; }
.lt-sep-b { margin-top: 4px; }
.lt-a { font: 700 21px "Liberation Serif", serif; color: #333; line-height: 20px; }
.lbl-txt { font: 700 8px "Liberation Mono", monospace; fill: #1f3f7a; }
.angle { width: 22px; height: 15px; margin-top: 2px; flex: none; background: #fff; font: 11px "Liberation Sans", sans-serif; line-height: 14px; color: #111; align-self: flex-start; margin-left: 3px; }

/* side panel */
.sidepanel { width: 225px; flex: none; display: flex; flex-direction: column; }
.overview { height: 189px; flex: none; background: #dfdfd0; border: 1px solid #6b6b6b; }
.ov-svg { display: block; width: 223px; height: 187px; }
.ov-wire { fill: none; stroke: #000; stroke-width: 1.200; }
.ov-dot { fill: #000; }
.devices { margin-top: 5px; flex: 1; display: flex; flex-direction: column; border: 1px solid #6b6b6b; background: #fff; min-height: 0; }
.dev-head { height: 23px; flex: none; display: flex; align-items: center; gap: 5px; padding: 0 0 2px 3px; background: linear-gradient(#eaf3fa, #b6d4ea); position: relative; }
.pl { width: 16px; height: 16px; border-radius: 4px; background: #2c86e6; color: #fff; font: 700 14px/16px "Liberation Sans", sans-serif; text-align: center; }
.dev-title { position: absolute; left: 0; right: 0; padding-left: 42px; text-align: center; font: 11px "Liberation Sans", sans-serif; color: #111; }
.dev-list { list-style: none; margin: 0; padding: 0; border-top: 1px solid #777; flex: 1; }
.dev { height: 13px; padding-left: 3px; font: 10.500px/13px "Liberation Sans", sans-serif; color: #000; }
.dev.selected { background: #0078d7; color: #fff; }

/* canvas */
.canvas { width: 1663px; margin-left: 4px; flex: none; background: #dfdfd0; position: relative; }
.schem { display: block; width: 1663px; height: 915px; }
.canvas::after { content: ""; position: absolute; inset: 0; border-left: 1px solid #555; border-top: 1px solid #555; border-bottom: 1px solid #555; pointer-events: none; }
.g-thin { fill: none; stroke: #bfbfae; stroke-width: 1; }
.g-thick { fill: none; stroke: #bcbcac; stroke-width: 2; }
.wire { fill: none; stroke: #0b470b; stroke-width: 2; }
.junction { fill: #0b470b; }
.pinline { fill: none; stroke: #800000; stroke-width: 2; }
.chip { fill: #c9c9ab; stroke: #800000; stroke-width: 2; }
.xtal { fill: none; stroke: #800000; stroke-width: 1.500; }
.sq-red { fill: #ff4040; }
.sq-blue { fill: #4040ff; }
.sq-grey { fill: #808080; }
.overbar { fill: none; stroke: #222; stroke-width: 1.300; }
.cursor { fill: none; stroke: #2a2ab8; stroke-width: 1; }
.ref { font: 20px "Liberation Sans", sans-serif; fill: #111; }
.pname { font: 14px "Liberation Sans", sans-serif; fill: #222; }
.pname.end { text-anchor: end; }

/* status */
.statusbar { height: 22px; display: flex; align-items: center; padding-top: 2px; background: linear-gradient(#e2eff8, #d8e9f5 40%, #b2d2e8); }
.grip-s { width: 13px; }
.status-text { font: 11px "Liberation Sans", sans-serif; color: #0b470b; white-space: nowrap; letter-spacing: -.01em; }
.status-right { margin-left: auto; display: flex; align-items: center; align-self: stretch; }
.status-sep { width: 1px; background: #a9c6dc; margin-right: 7px; }
.grip-s2 { width: 21px; }
.coord { width: 52px; font: 11px "Liberation Sans", sans-serif; color: #111; white-space: nowrap; }
.coord.th { width: 12px; color: #12208a; }

/* taskbar */
.taskbar { height: 39px; flex: none; display: flex; align-items: center; position: relative; background: linear-gradient(90deg, #2b2e5d, #2a2d5c 50%, #1d1f4d 80%); color: #fff; }
.wallpaper { position: absolute; left: 0; top: 0; width: 400px; height: 39px; }
.start { position: relative; width: 48px; height: 39px; flex: none; display: flex; align-items: center; justify-content: center; padding-right: 1px; }
.apps { position: relative; display: flex; margin-left: 530.500px; height: 39px; }
.app { width: 49px; height: 39px; display: flex; align-items: center; justify-content: center; position: relative; }
.app svg { width: 24px; height: 24px; }
.app.pinned::after { content: ""; position: absolute; left: 4.500px; right: 4.500px; bottom: 0; height: 1px; background: #f4b4c8; }
.app.running { background: #4a4c74; }
.app.running::after { left: 0; right: 0; }
.ps-txt { font: 700 11px "Liberation Sans", sans-serif; fill: #31a8ff; }
.ai-txt { font: 700 11px "Liberation Sans", sans-serif; fill: #ff9a00; }
.vs-txt { font: 700 8px "Liberation Sans", sans-serif; fill: #fff; }
.tray { position: relative; margin-left: auto; display: flex; align-items: center; height: 39px; padding-right: 12px; }
.weather { width: 24px; height: 20px; flex: none; }
.tray-txt { font: 13.500px "Open Sans", sans-serif; color: #eef; white-space: nowrap; }
.temp { margin-left: 8px; width: 36px; }
.haze { width: 55px; }
.chev { width: 12px; height: 7px; flex: none; }
.tray-ico { flex: none; }
.cam { width: 11px; height: 15px; margin-left: 13px; }
.net { width: 16px; height: 14px; margin-left: 10px; }
.vol { width: 16px; height: 14px; margin-left: 8px; }
.clock { width: 68px; display: flex; flex-direction: column; align-items: center; gap: 1px; font: 12.500px/16px "Open Sans", sans-serif; color: #eef; }
.notif { width: 40px; height: 39px; background: #2a2c58; display: flex; align-items: center; justify-content: center; }
.badge { font: 700 10px "Liberation Sans", sans-serif; fill: #fff; }
```
